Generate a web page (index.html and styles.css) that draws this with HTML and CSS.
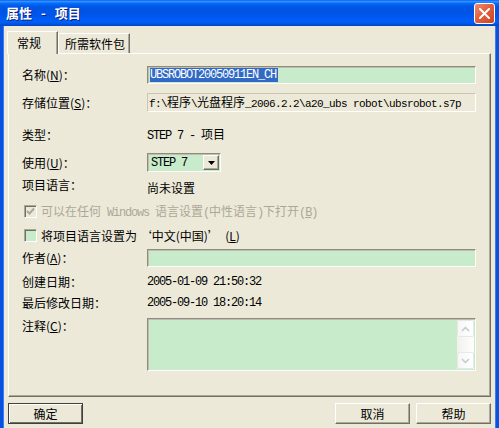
FILE: index.html
```html
<!DOCTYPE html>
<html lang="zh-CN">
<head>
    <meta charset="UTF-8">
    <title>属性 - 项目</title>
    <link rel="stylesheet" href="styles.css">
</head>
<body>
    <div class="window">
        <div class="titlebar">
            <span class="title">属性 - 项目</span>
            <span class="close">
                <svg width="11" height="11" viewBox="0 0 11 11">
                    <path d="M1 1 L10 10 M10 1 L1 10" stroke="#fff" stroke-width="2" stroke-linecap="square"/>
                </svg>
            </span>
        </div>

        <div class="client">
            <div class="tabs">
                <div class="tab active">常规</div>
                <div class="tab">所需软件包</div>
            </div>

            <div class="panel">
                <div class="row r1">
                    <span class="lbl">名称(<u>N</u>)：</span>
                    <div class="field green"><span class="sel mono">UBSROBOT20050911EN_CH</span></div>
                </div>

                <div class="row r2">
                    <span class="lbl">存储位置(<u>S</u>)：</span>
                    <div class="field readonly">
                        <p class="path"><span class="pm">f:\</span>程序<span class="pm">\</span>光盘程序<span class="pm">_2006.2.2\a20_ubs robot\ubsrobot.s7p</span></p>
                    </div>
                </div>

                <div class="row r3">
                    <span class="lbl">类型：</span>
                    <span class="val"><span class="mono">STEP 7 - </span>项目</span>
                </div>

                <div class="row r4">
                    <span class="lbl">使用(<u>U</u>)：</span>
                    <div class="combo">
                        <span class="mono">STEP 7</span>
                        <span class="combo-btn">
                            <svg width="7" height="4" viewBox="0 0 7 4"><path d="M0 0 H7 L3.5 4 Z" fill="#000"/></svg>
                        </span>
                    </div>
                </div>

                <div class="row r5">
                    <span class="lbl">项目语言：</span>
                    <span class="val low">尚未设置</span>
                </div>

                <div class="row r6 check-row disabled">
                    <span class="box">
                        <svg width="9" height="9" viewBox="0 0 9 9"><path d="M1 4 L3.5 6.5 L8 1.5" fill="none" stroke="#ACA899" stroke-width="2"/></svg>
                    </span>
                    <span>可以在任何<span class="mono"> Windows </span>语言设置<span class="mono">(</span>中性语言<span class="mono">)</span>下打开<span class="mono">(<u>B</u>)</span></span>
                </div>

                <div class="row r7 check-row">
                    <span class="box green"></span>
                    <span>将项目语言设置为 ‘中文(中国)’ &nbsp;(<u>L</u>)</span>
                </div>

                <div class="row r8">
                    <span class="lbl">作者(<u>A</u>)：</span>
                    <div class="field green"></div>
                </div>

                <div class="row r9">
                    <span class="lbl">创建日期：</span>
                    <span class="val mono">2005-01-09 21:50:32</span>
                </div>

                <div class="row r10">
                    <span class="lbl">最后修改日期：</span>
                    <span class="val mono">2005-09-10 18:20:14</span>
                </div>

                <div class="row r11">
                    <span class="lbl">注释(<u>C</u>)：</span>
                    <div class="field green memo">
                        <div class="scrollbar">
                            <span class="sb-btn">
                                <svg width="9" height="6" viewBox="0 0 9 6"><path d="M1 5 L4.5 1.5 L8 5" fill="none" stroke="#C3C8D4" stroke-width="1.5"/></svg>
                            </span>
                            <span class="sb-track"></span>
                            <span class="sb-btn">
                                <svg width="9" height="6" viewBox="0 0 9 6"><path d="M1 1 L4.5 4.5 L8 1" fill="none" stroke="#C3C8D4" stroke-width="1.5"/></svg>
                            </span>
                        </div>
                    </div>
                </div>
            </div>

            <div class="buttons">
                <button class="btn default">确定</button>
                <div class="btn-group">
                    <button class="btn">取消</button>
                    <button class="btn">帮助</button>
                </div>
            </div>
        </div>
    </div>
</body>
</html>
```

FILE: styles.css
```css
body {
    margin: 0;
    width: 499px;
    height: 428px;
    overflow: hidden;
    background: #ECE9D8;
    font-family: "Noto Sans CJK SC", "Liberation Sans", sans-serif;
    font-size: 12px;
    color: #000;
}
.window {
    width: 499px;
    height: 428px;
    background: #ECE9D8;
}
.titlebar {
    height: 26px;
    display: flex;
    align-items: center;
    justify-content: space-between;
    padding: 0 4px 0 6px;
    box-sizing: border-box;
    background: linear-gradient(to bottom, #0058EE 0%, #3A93FF 5%, #1A80FF 9%, #036FFC 13%, #0262EE 18%, #0057E5 26%, #0054E3 40%, #0055EB 60%, #005BF5 72%, #0060F8 84%, #0055E0 92%, #0045C0 100%);
}
.title {
    color: #fff;
    font-weight: bold;
    font-size: 13px;
    line-height: 14px;
    word-spacing: 6px;
    text-shadow: 1px 1px 0 #0A1E80;
}
.close {
    width: 21px;
    height: 21px;
    box-sizing: border-box;
    border: 1px solid #fff;
    border-radius: 3px;
    background: linear-gradient(135deg, #F08C6C 0%, #E2603E 45%, #CC4422 100%);
    display: flex;
    align-items: center;
    justify-content: center;
}
.client {
    height: 402px;
    padding: 0 5px;
    border-left: 3px solid #0852E0;
    border-right: 3px solid #0852E0;
    box-shadow: inset 1px 0 0 #3C7CF0, inset -1px 0 0 #3C7CF0;
}
.tabs {
    height: 27px;
    display: flex;
    align-items: flex-end;
}
.tab {
    height: 20px;
    line-height: 19px;
    box-sizing: border-box;
    width: 72px;
    padding-left: 6px;
    border-top: 1px solid #fff;
    border-left: 1px solid #fff;
    border-right: 1px solid #716F64;
    box-shadow: inset -1px 0 0 #ACA899;
}
.tab.active {
    position: relative;
    z-index: 1;
    width: 51px;
    height: 23px;
    margin-left: -1px;
    margin-bottom: -1px;
    padding-left: 9px;
    line-height: 21px;
    background: #ECE9D8;
}
.panel {
    height: 344px;
    box-sizing: border-box;
    padding: 12px 14px 0 13px;
    border-top: 1px solid #fff;
    border-left: 1px solid #fff;
    border-right: 1px solid #716F64;
    border-bottom: 1px solid #716F64;
    box-shadow: inset -1px -1px 0 #ACA899;
}
.row {
    display: flex;
    align-items: center;
    height: 18px;
}
.r2 { margin-top: 9px; height: 19px; }
.r3 { margin-top: 14px; }
.r4 { margin-top: 9px; height: 19px; }
.r5 { margin-top: 4px; }
.r6 { margin-top: 8px; }
.r7 { margin-top: 6px; }
.r8 { margin-top: 5px; }
.r9 { margin-top: 6px; }
.r10 { margin-top: 3px; }
.r11 { margin-top: 6px; height: 53px; align-items: flex-start; }
.lbl {
    width: 125px;
    flex: none;
    line-height: 14px;
}
.r11 .lbl {
    padding-top: 1px;
}
.val {
    line-height: 14px;
}
.val.low {
    padding-top: 6px;
}
.mono {
    font-family: "Liberation Mono", monospace;
    letter-spacing: -1.2px;
}
.field {
    width: 329px;
    height: 100%;
    box-sizing: border-box;
    display: flex;
    align-items: center;
    padding-left: 2px;
    border: 1px solid;
    border-color: #8E8C80 #fff #fff #8E8C80;
    box-shadow: inset 1px 1px 0 #C0BDAE;
}
.green {
    background: #C7EBCB;
}
.readonly {
    width: 330px;
    border-color: #C9C6B6 #fff #fff #C9C6B6;
    box-shadow: none;
    padding-left: 1px;
}
.path {
    margin: 0;
    white-space: nowrap;
    line-height: 14px;
}
.path .pm {
    font-family: "Liberation Mono", monospace;
    font-size: 11px;
    letter-spacing: -0.6px;
}
.sel {
    background: #316AC5;
    color: #fff;
    line-height: 14px;
    height: 14px;
    padding: 0 2px 0 0;
}
.combo {
    width: 74px;
    height: 19px;
    box-sizing: border-box;
    display: flex;
    align-items: center;
    justify-content: space-between;
    padding: 1px 1px 1px 3px;
    background: #C7EBCB;
    border: 1px solid;
    border-color: #8E8C80 #fff #fff #8E8C80;
    box-shadow: inset 1px 1px 0 #C0BDAE;
}
.combo-btn {
    width: 16px;
    height: 15px;
    box-sizing: border-box;
    display: flex;
    align-items: center;
    justify-content: center;
    background: #ECE9D8;
    border: 1px solid;
    border-color: #fff #716F64 #716F64 #fff;
    box-shadow: inset -1px -1px 0 #ACA899;
}
.check-row {
    padding-left: 2px;
}
.check-row .box {
    width: 13px;
    height: 13px;
    flex: none;
    box-sizing: border-box;
    margin-right: 4px;
    display: flex;
    align-items: center;
    justify-content: center;
    border: 1px solid;
    border-color: #ACA899 #fff #fff #ACA899;
    box-shadow: inset 1px 1px 0 #716F64;
}
.disabled {
    color: #ACA899;
}
.memo {
    height: 53px;
    justify-content: flex-end;
    align-items: stretch;
    padding: 1px 1px 1px 2px;
}
.scrollbar {
    width: 17px;
    display: flex;
    flex-direction: column;
    background: linear-gradient(to right, #F3F1EC, #FEFEFB);
}
.sb-btn {
    height: 17px;
    box-sizing: border-box;
    display: flex;
    align-items: center;
    justify-content: center;
    border: 1px solid #E6E8EE;
    border-radius: 2px;
    background: linear-gradient(to right, #F6F6F3, #FFFFFF);
}
.sb-track {
    flex: 1;
}
.buttons {
    display: flex;
    justify-content: space-between;
    margin-top: 6px;
}
.btn-group {
    display: flex;
    gap: 6px;
}
.btn {
    width: 75px;
    height: 21px;
    padding: 0;
    margin: 0;
    font-family: "Noto Sans CJK SC", sans-serif;
    font-size: 12px;
    color: #000;
    background: #ECE9D8;
    border: 1px solid;
    border-color: #fff #716F64 #716F64 #fff;
    box-shadow: inset -1px -1px 0 #ACA899;
}
.btn.default {
    border-color: #404040;
    box-shadow: inset 1px 1px 0 #fff, inset -1px -1px 0 #716F64;
}
```
